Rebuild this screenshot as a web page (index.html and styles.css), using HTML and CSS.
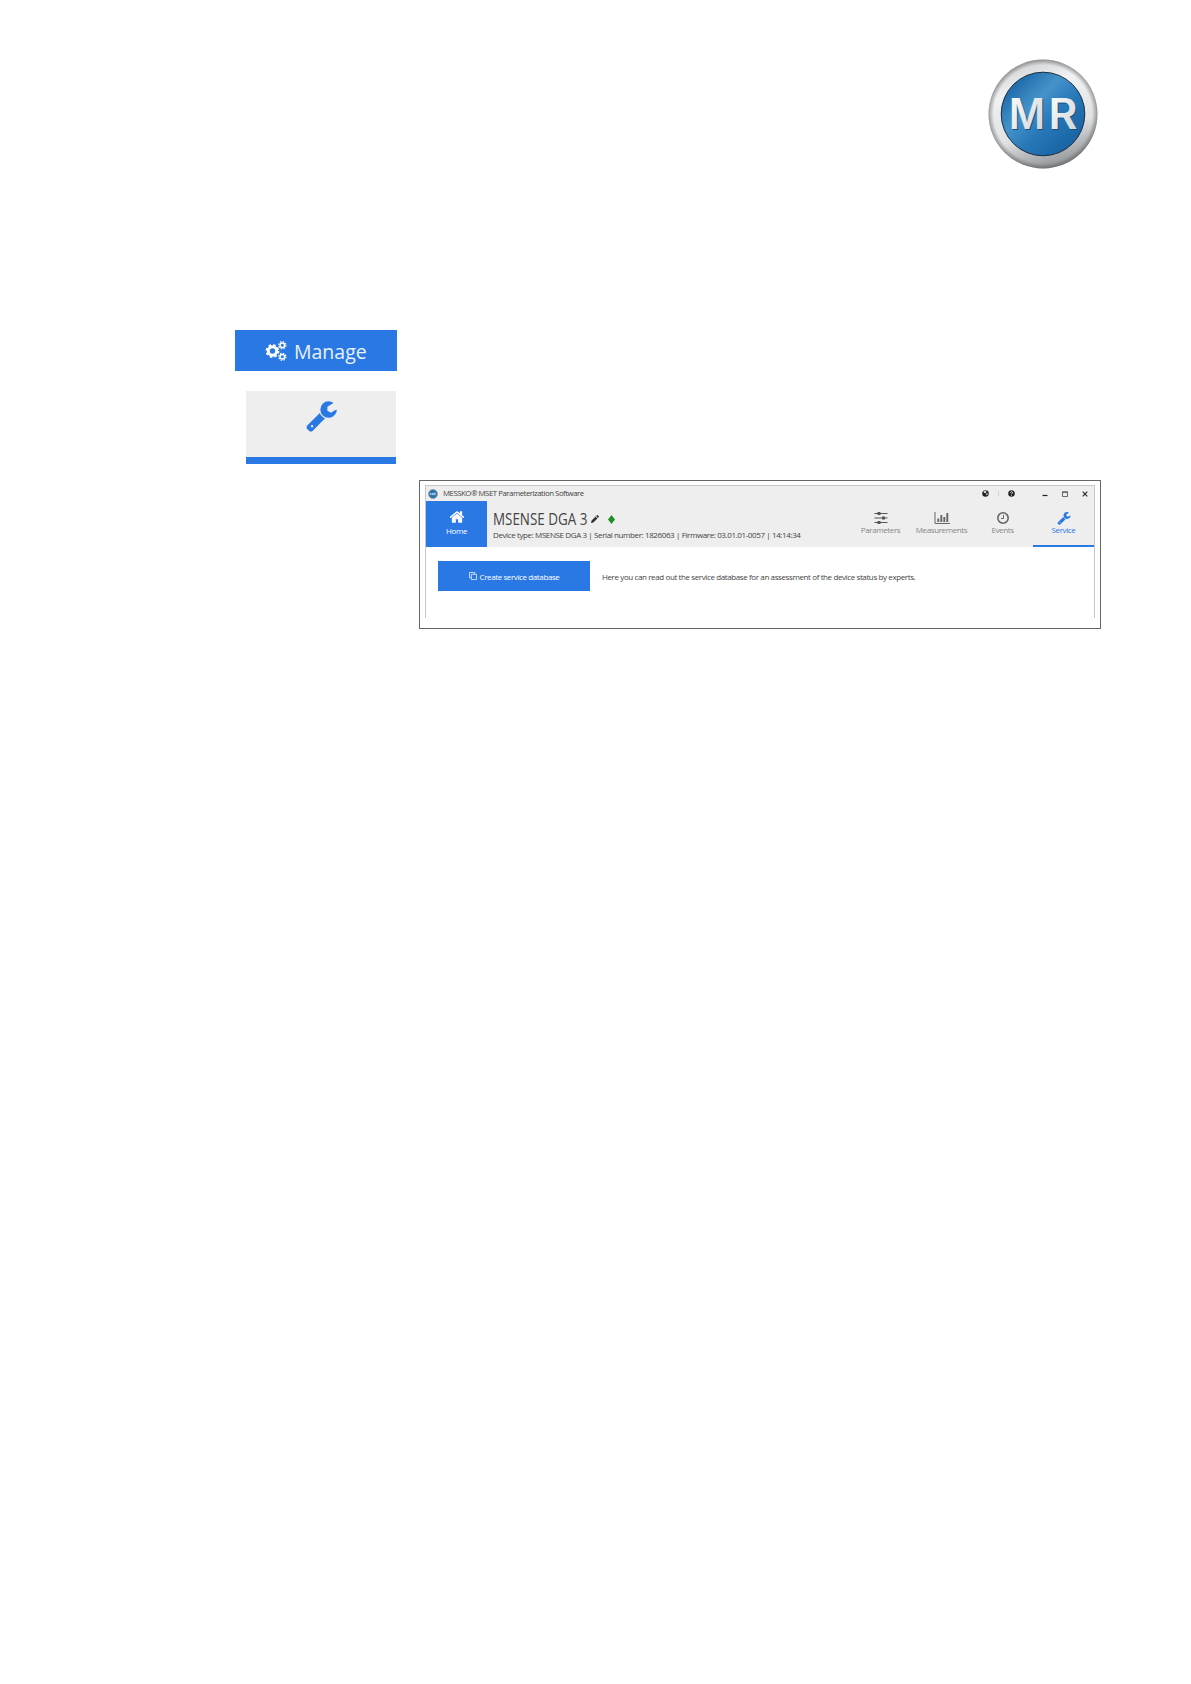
FILE: index.html
```html
<!DOCTYPE html>
<html lang="en">
  <head>
    <meta charset="UTF-8" />
    <meta name="viewport" content="width=device-width, initial-scale=1.0" />
    <title>MESSKO MSET Parameterization Software</title>
    <link rel="stylesheet" href="styles.css">
  </head>
  <body>
    <!-- shared symbols -->
    <svg class="symbols" width="0" height="0">
      <symbol id="wrench" viewBox="0 0 1792 1792">
        <path d="M448 1472q0-26-19-45t-45-19-45 19-19 45 19 45 45 19 45-19 19-45zm644-420l-682 682q-37 37-90 37-52 0-91-37l-106-108q-38-36-38-90 0-53 38-91l681-681q39 98 114.500 173.500t173.500 114.500zm634-435q0 39-23 106-47 134-164.500 217.500t-258.500 83.500q-185 0-316.500-131.500t-131.500-316.500 131.500-316.500 316.500-131.500q58 0 121.500 16.500t107.500 46.500q16 11 16 28t-16 28l-293 169v224l193 107q5-3 79-48.500t135.500-81 70.500-35.500q15 0 23.500 10t8.500 25z" />
      </symbol>
    </svg>

    <header class="page-header">
      <svg class="logo" viewBox="0 0 110 110" width="110" height="110">
        <defs>
          <linearGradient id="ring" x1="0.35" y1="0" x2="0.65" y2="1">
            <stop offset="0" stop-color="#cfd1d3" />
            <stop offset="0.25" stop-color="#f1f2f3" />
            <stop offset="0.65" stop-color="#dfe1e3" />
            <stop offset="1" stop-color="#8b8f92" />
          </linearGradient>
          <radialGradient id="edge">
            <stop offset="0.9" stop-color="#555" stop-opacity="0" />
            <stop offset="1" stop-color="#444" stop-opacity="0.5" />
          </radialGradient>
          <linearGradient id="disc" x1="0.1" y1="0.1" x2="0.9" y2="0.9">
            <stop offset="0" stop-color="#1663a3" />
            <stop offset="0.35" stop-color="#4592ca" />
            <stop offset="0.6" stop-color="#2878b8" />
            <stop offset="1" stop-color="#1560a0" />
          </linearGradient>
          <linearGradient id="letters" x1="0" y1="0" x2="1" y2="1">
            <stop offset="0" stop-color="#fff" />
            <stop offset="1" stop-color="#cdd2d6" />
          </linearGradient>
        </defs>
        <circle cx="55" cy="55" r="54.500" fill="url(#ring)" />
        <circle cx="55" cy="55" r="54.500" fill="url(#edge)" />
        <circle cx="55" cy="55" r="41.800" fill="url(#disc)" stroke="#1c2c3a" />
        <g class="logo-shadow">
          <text x="22" y="71" textLength="36" lengthAdjust="spacingAndGlyphs">M</text>
          <text x="61.500" y="71" textLength="29" lengthAdjust="spacingAndGlyphs">R</text>
        </g>
        <g class="logo-text" fill="url(#letters)">
          <text x="21" y="70" textLength="36" lengthAdjust="spacingAndGlyphs">M</text>
          <text x="60.500" y="70" textLength="29" lengthAdjust="spacingAndGlyphs">R</text>
        </g>
      </svg>
    </header>

    <main class="content">
      <aside class="margin-icons">
        <div class="manage">
          <svg width="22" height="20" viewBox="0 0 22 20" fill="none" stroke="#fff">
            <circle cx="7.500" cy="10" r="4.200" stroke-width="3" />
            <circle cx="7.500" cy="10" r="6" stroke-width="1.800" stroke-dasharray="2.500 2.210" />
            <circle cx="17.300" cy="4.200" r="2.300" stroke-width="1.500" />
            <circle cx="17.300" cy="4.200" r="3.600" stroke-width="1.200" stroke-dasharray="1.500 1.330" />
            <circle cx="17.300" cy="15.800" r="2.300" stroke-width="1.500" />
            <circle cx="17.300" cy="15.800" r="3.600" stroke-width="1.200" stroke-dasharray="1.500 1.330" />
          </svg>
          <span>Manage</span>
        </div>
        <div class="service-tile">
          <svg width="33" height="33"><use href="#wrench" /></svg>
        </div>
      </aside>

      <figure class="frame">
        <div class="window">
          <div class="titlebar">
            <svg class="app-icon" width="10" height="10" viewBox="0 0 10 10">
              <circle cx="5" cy="5" r="4.500" fill="#2673ac" stroke="#8d9ba5" stroke-width="0.800" />
              <path d="M2.200 6.200V4l1.200 1.500L4.600 4v2.200M5.700 6.200V4h1.600v1.200H6.200l1.300 1" fill="none" stroke="#d7e4ee" stroke-width="0.700" />
            </svg>
            <span class="app-name">MESSKO® MSET Parameterization Software</span>
            <div class="window-buttons">
              <svg width="7" height="7" viewBox="0 0 14 14">
                <circle cx="7" cy="7" r="6.500" fill="#222" />
                <path d="M3 2.500l4-1 2 2-2 3-3-1zM9 6.500l3 .5-2 4-2-2z" fill="#ddd" />
              </svg>
              <i class="divider"></i>
              <svg width="7" height="7" viewBox="0 0 14 14">
                <circle cx="7" cy="7" r="6.500" fill="#222" />
                <path d="M4.800 5.200C5 2.800 9.400 2.800 9.200 5.400 9 6.800 7 6.700 7 8.300M7 9.500v1.800" fill="none" stroke="#eee" stroke-width="1.800" />
              </svg>
              <svg class="minimize" width="6" height="6" viewBox="0 0 6 6"><path d="M.5 4.500h5" stroke="#222" stroke-width="1.200" /></svg>
              <svg class="maximize" width="6" height="6" viewBox="0 0 6 6"><path d="M.5.800h5v4.700h-5zM.5 1.300h5" fill="none" stroke="#333" stroke-width="0.700" /></svg>
              <svg class="close" width="6" height="6" viewBox="0 0 6 6"><path d="M.7.700l4.600 4.600M5.300.700L.7 5.300" stroke="#222" stroke-width="1.100" /></svg>
            </div>
          </div>

          <div class="toolbar">
            <div class="home">
              <svg width="16" height="16" viewBox="0 0 1792 1792" fill="#fff">
                <path d="M1472 992v480q0 26-19 45t-45 19h-384v-384h-256v384h-384q-26 0-45-19t-19-45v-480q0-1 .5-3t.5-3l575-474 575 474q1 2 1 6zm223-69l-62 74q-8 9-21 11h-3q-13 0-21-7l-692-577-692 577q-12 8-24 7-13-2-21-11l-62-74q-8-10-7-23.500t11-21.500l719-599q32-26 76-26t76 26l244 204v-195q0-14 9-23t23-9h192q14 0 23 9t9 23v408l219 182q10 8 11 21.500t-7 23.500z" />
              </svg>
              <span>Home</span>
            </div>
            <div class="device">
              <div class="device-name">
                <h1>MSENSE DGA 3</h1>
                <svg class="pencil" width="8" height="8" viewBox="0 0 8 8" fill="#333">
                  <path d="M0 8l.6-2.400L4.600 1.600l1.800 1.800-4 4zM5.100 1.100L6 .2q.4-.3.800 0l1 1q.3.400 0 .8l-.9.900z" />
                </svg>
                <svg class="status" width="7" height="9" viewBox="0 0 7 9"><path d="M3.500 0L7 4.500 3.500 9 0 4.500z" fill="#1f8f24" /></svg>
              </div>
              <p class="device-info">Device type: MSENSE DGA 3 | Serial number: 1826063 | Firmware: 03.01.01-0057 | 14:14:34</p>
            </div>
            <nav class="tabs">
              <div class="tab">
                <svg width="14" height="14" viewBox="0 0 14 14" stroke="#555" fill="#555">
                  <path d="M.5 2.500h13M.5 7h13M.5 11.500h13" />
                  <path d="M3.500 2.500h3M8 7h3M3.500 11.500h3" stroke-width="3" />
                </svg>
                <span>Parameters</span>
              </div>
              <div class="tab">
                <svg width="16" height="14" viewBox="0 0 16 14" fill="none" stroke="#666">
                  <path d="M1 1v11.500h15" />
                  <path d="M4.300 11V7.500M7.300 11V4M10.300 11V6M13.300 11V2" stroke-width="1.900" />
                </svg>
                <span>Measurements</span>
              </div>
              <div class="tab">
                <svg width="14" height="14" viewBox="0 0 14 14" fill="none" stroke="#666">
                  <circle cx="7" cy="7" r="5.200" stroke-width="1.600" />
                  <path d="M7.500 3.800v3.700H5" />
                </svg>
                <span>Events</span>
              </div>
              <div class="tab active">
                <svg width="14" height="14"><use href="#wrench" /></svg>
                <span>Service</span>
              </div>
            </nav>
          </div>

          <div class="panel">
            <div class="create">
              <svg width="8" height="8" viewBox="0 0 8 8" fill="none" stroke="#fff" stroke-width="0.700">
                <path d="M2.300 2.300h5.200v5.200H2.300zM2.300 5.700H.5V.5h5.200v1.800" />
              </svg>
              <span>Create service database</span>
            </div>
            <p class="hint">Here you can read out the service database for an assessment of the device status by experts.</p>
          </div>
        </div>
      </figure>
    </main>
  </body>
</html>
```
FILE: styles.css
```css
* {
  box-sizing: border-box;
}

body {
  margin: 0;
  background: #fff;
  color: #444;
  font-family: "Open Sans", "Noto Sans", sans-serif;
  font-size: 8px;
  letter-spacing: -0.39px;
}

h1,
p,
figure {
  margin: 0;
}

svg {
  display: block;
  flex: none;
}

span,
p,
h1 {
  white-space: nowrap;
}

.symbols {
  position: absolute;
}

.page-header {
  display: flex;
  justify-content: flex-end;
  height: 330px;
  padding: 59px 93px 0 0;
}

.logo text {
  font-family: Inter, sans-serif;
  font-weight: 600;
  font-size: 42px;
  letter-spacing: 0;
}

.logo-shadow {
  fill: #174d78;
}

.content {
  display: flex;
}

.margin-icons {
  width: 419px;
  padding-left: 235px;
}

.manage {
  display: flex;
  align-items: center;
  gap: 7px;
  width: 162px;
  height: 41px;
  padding: 0 0 0 30px;
  background: #2a78e4;
  color: #e8f1fd;
  font-size: 19.5px;
  letter-spacing: 0;
}

.manage span {
  padding-top: 1px;
}

.service-tile {
  display: flex;
  justify-content: center;
  width: 150px;
  height: 73px;
  margin: 20px 0 0 11px;
  padding-top: 8px;
  background: #eee;
  border-bottom: 7px solid #2a78e4;
  fill: #2a78e4;
}

.frame {
  width: 682px;
  height: 149px;
  margin-top: 150px;
  padding: 4px 5px;
  border: 1px solid #666;
}

.window {
  width: 670px;
  height: 133px;
  border: 1px solid #c4c8c8;
  border-bottom: 0;
}

.titlebar {
  display: flex;
  align-items: center;
  height: 15px;
  padding: 0 6px 0 2px;
  background: #eee;
}

.app-name {
  margin: -1px 0 0 5px;
  font-size: 7.8px;
  letter-spacing: -0.46px;
}

.window-buttons {
  display: flex;
  align-items: center;
  margin-left: auto;
}

.divider {
  width: 1px;
  height: 5px;
  margin: 0 9px;
  background: #d5d5d5;
}

.minimize {
  margin-left: 27px;
}

.maximize,
.close {
  margin-left: 14px;
}

.toolbar {
  display: flex;
  height: 46px;
  background: #eee;
}

.home {
  display: flex;
  flex-direction: column;
  align-items: center;
  width: 61px;
  padding-top: 8px;
  background: #2a78e4;
  color: #fff;
  line-height: 10px;
}

.home span {
  margin-top: 1px;
}

.device {
  padding: 8px 0 0 6px;
}

.device-name {
  display: flex;
  align-items: center;
  height: 20px;
}

/* condensed heading */
.device h1 {
  margin-right: -15px;
  font-size: 15.5px;
  font-weight: 400;
  letter-spacing: 0;
  line-height: 20px;
  transform: scaleX(0.865);
  transform-origin: left;
}

.pencil {
  margin-left: 4px;
}

.status {
  margin-left: 9px;
}

.device-info {
  line-height: 10px;
  margin-top: 1px;
}

.tabs {
  display: flex;
  margin-left: auto;
}

.tab {
  display: flex;
  flex-direction: column;
  align-items: center;
  width: 61px;
  padding-top: 10px;
  color: #888;
  line-height: 10px;
}

.tab.active {
  border-bottom: 2px solid #2a78e4;
  color: #2a78e4;
  fill: #2a78e4;
}

.panel {
  display: flex;
  align-items: center;
  padding: 14px 0 0 12px;
}

.create {
  display: flex;
  align-items: center;
  justify-content: center;
  gap: 3px;
  width: 152px;
  height: 30px;
  background: #2a78e4;
  color: #fff;
}

.hint {
  margin-left: 12px;
}
```
